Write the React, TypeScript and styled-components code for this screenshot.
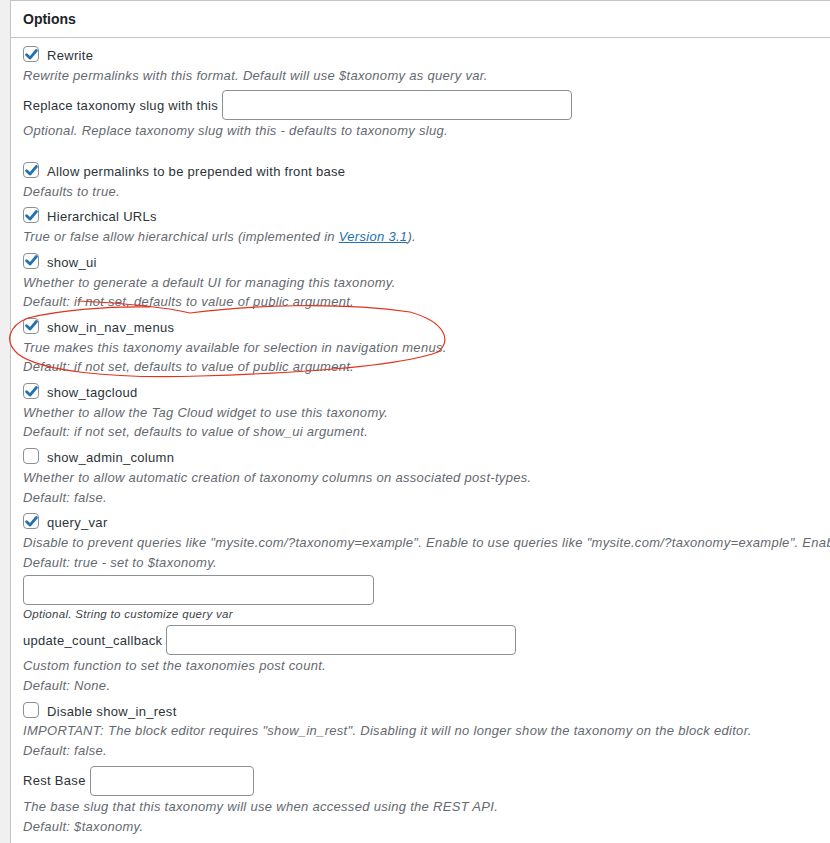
import React from "react";
import styled, { createGlobalStyle } from "styled-components";

const GlobalStyle = createGlobalStyle`
  html, body {
    margin: 0;
    padding: 0;
    overflow: hidden;
    background: #f0f0f1;
  }
  body {
    font-family: "Liberation Sans", Arial, sans-serif;
    font-size: 13px;
    letter-spacing: 0.3px;
    color: #2c3338;
  }
`;

interface CheckOption {
  label: string;
  checked: boolean;
  lines: React.ReactNode[];
}

const Page = styled.div`
  position: relative;
  padding-left: 10px;
  height: 843px;
`;

const Panel = styled.div`
  width: 1100px;
  background: #fff;
  border: 1px solid #c3c4c7;
  border-right: none;
  height: 900px;
`;

const Header = styled.div`
  height: 36px;
  border-bottom: 1px solid #c3c4c7;
  display: flex;
  align-items: center;
  padding: 0 12px;
  font-size: 14px;
  font-weight: 600;
  letter-spacing: 0;
  color: #1d2327;
`;

const Body = styled.div`
  padding: 8px 12px 0;
  display: flex;
  flex-direction: column;
`;

const Block = styled.div<{ $after?: number }>`
  display: flex;
  flex-direction: column;
  margin-bottom: ${(p) => (p.$after ?? 6)}px;
`;

const CheckRow = styled.label`
  display: flex;
  align-items: flex-start;
  gap: 8px;
  height: 19.7px;
  line-height: 19.7px;
  color: #2c3338;
`;

const Box = styled.span<{ $checked: boolean }>`
  width: 16px;
  height: 16px;
  box-sizing: border-box;
  border: 1px solid #8c8f94;
  border-radius: 4px;
  background: #fff;
  display: flex;
  align-items: center;
  justify-content: center;
  flex-shrink: 0;
`;

const Desc = styled.div`
  font-style: italic;
  color: #646970;
  line-height: 19.7px;
  white-space: nowrap;
`;

const SmallDesc = styled.div`
  font-style: italic;
  color: #3c434a;
  font-size: 11.5px;
  line-height: 16px;
  white-space: nowrap;
  margin: 0 0 3px;
`;

const InputRow = styled.div<{ $top?: number }>`
  display: flex;
  align-items: center;
  gap: 4px;
  height: 30px;
  margin-top: ${(p) => (p.$top ?? 0)}px;
  margin-bottom: 1px;
  color: #2c3338;
`;

const TextInput = styled.input<{ $w: number }>`
  width: ${(p) => p.$w}px;
  height: 30px;
  box-sizing: border-box;
  border: 1px solid #8c8f94;
  border-radius: 4px;
  background: #fff;
  padding: 0 8px;
  font-family: inherit;
  font-size: 13px;
  outline: none;
`;

const Link = styled.a`
  color: #2271b1;
  text-decoration: underline;
`;

const Annotation = styled.svg`
  position: absolute;
  left: 0;
  top: 0;
  width: 830px;
  height: 843px;
  pointer-events: none;
`;

const CheckMark = () => (
  <svg width="13" height="13" viewBox="0 0 12 12">
    <path
      d="M1.5 6.3 L4.6 9.3 L10.5 2.3"
      fill="none"
      stroke="#2271b1"
      strokeWidth="2.6"
      strokeLinecap="round"
      strokeLinejoin="round"
    />
  </svg>
);

const Check = ({ label, checked }: { label: string; checked: boolean }) => (
  <CheckRow>
    <Box $checked={checked}>{checked && <CheckMark />}</Box>
    <span>{label}</span>
  </CheckRow>
);

const OptionBlock = ({ label, checked, lines }: CheckOption) => (
  <Block>
    <Check label={label} checked={checked} />
    {lines.map((l, i) => (
      <Desc key={i}>{l}</Desc>
    ))}
  </Block>
);

const middleOptions: CheckOption[] = [
  {
    label: "Allow permalinks to be prepended with front base",
    checked: true,
    lines: ["Defaults to true."],
  },
  {
    label: "Hierarchical URLs",
    checked: true,
    lines: [
      <>
        True or false allow hierarchical urls (implemented in{" "}
        <Link href="#">Version 3.1</Link>).
      </>,
    ],
  },
  {
    label: "show_ui",
    checked: true,
    lines: [
      "Whether to generate a default UI for managing this taxonomy.",
      "Default: if not set, defaults to value of public argument.",
    ],
  },
  {
    label: "show_in_nav_menus",
    checked: true,
    lines: [
      "True makes this taxonomy available for selection in navigation menus.",
      "Default: if not set, defaults to value of public argument.",
    ],
  },
  {
    label: "show_tagcloud",
    checked: true,
    lines: [
      "Whether to allow the Tag Cloud widget to use this taxonomy.",
      "Default: if not set, defaults to value of show_ui argument.",
    ],
  },
  {
    label: "show_admin_column",
    checked: false,
    lines: [
      "Whether to allow automatic creation of taxonomy columns on associated post-types.",
      "Default: false.",
    ],
  },
];

export default function App() {
  return (
    <Page>
      <GlobalStyle />
      <Panel>
        <Header>Options</Header>
        <Body>
          <OptionBlock
            label="Rewrite"
            checked
            lines={[
              "Rewrite permalinks with this format. Default will use $taxonomy as query var.",
            ]}
          />
          <Block $after={21}>
            <InputRow $top={-1}>
              Replace taxonomy slug with this
              <TextInput $w={350} />
            </InputRow>
            <Desc>
              Optional. Replace taxonomy slug with this - defaults to taxonomy
              slug.
            </Desc>
          </Block>

          {middleOptions.map((o) => (
            <OptionBlock key={o.label} {...o} />
          ))}

          <Block>
            <Check label="query_var" checked />
            <Desc>
              Disable to prevent queries like
              "mysite.com/?taxonomy=example". Enable to use queries like
              "mysite.com/?taxonomy=example". Enable and set a value to use
              queries like "mysite.com/?query_var_value=example"
            </Desc>
            <Desc>Default: true - set to $taxonomy.</Desc>
            <InputRow $top={3}>
              <TextInput $w={351} />
            </InputRow>
            <SmallDesc>Optional. String to customize query var</SmallDesc>
            <InputRow>
              update_count_callback
              <TextInput $w={350} />
            </InputRow>
            <Desc>Custom function to set the taxonomies post count.</Desc>
            <Desc>Default: None.</Desc>
          </Block>

          <OptionBlock
            label="Disable show_in_rest"
            checked={false}
            lines={[
              'IMPORTANT: The block editor requires "show_in_rest". Disabling it will no longer show the taxonomy on the block editor.',
              "Default: false.",
            ]}
          />

          <Block>
            <InputRow $top={-1}>
              Rest Base
              <TextInput $w={164} />
            </InputRow>
            <Desc>
              The base slug that this taxonomy will use when accessed using the
              REST API.
            </Desc>
            <Desc>Default: $taxonomy.</Desc>
          </Block>
        </Body>
      </Panel>
      <Annotation viewBox="0 0 830 843">
        <path
          d="M78 301 C 120 303, 160 306, 190 313 C 250 305, 340 302, 410 312 C 445 322, 452 340, 438 352 C 400 366, 300 373, 200 376 C 110 379, 40 371, 18 354 C 4 342, 8 326, 28 318 C 60 310, 110 306, 150 307"
          fill="none"
          stroke="#e0321c"
          strokeWidth="1.2"
          strokeLinecap="round"
        />
      </Annotation>
    </Page>
  );
}
